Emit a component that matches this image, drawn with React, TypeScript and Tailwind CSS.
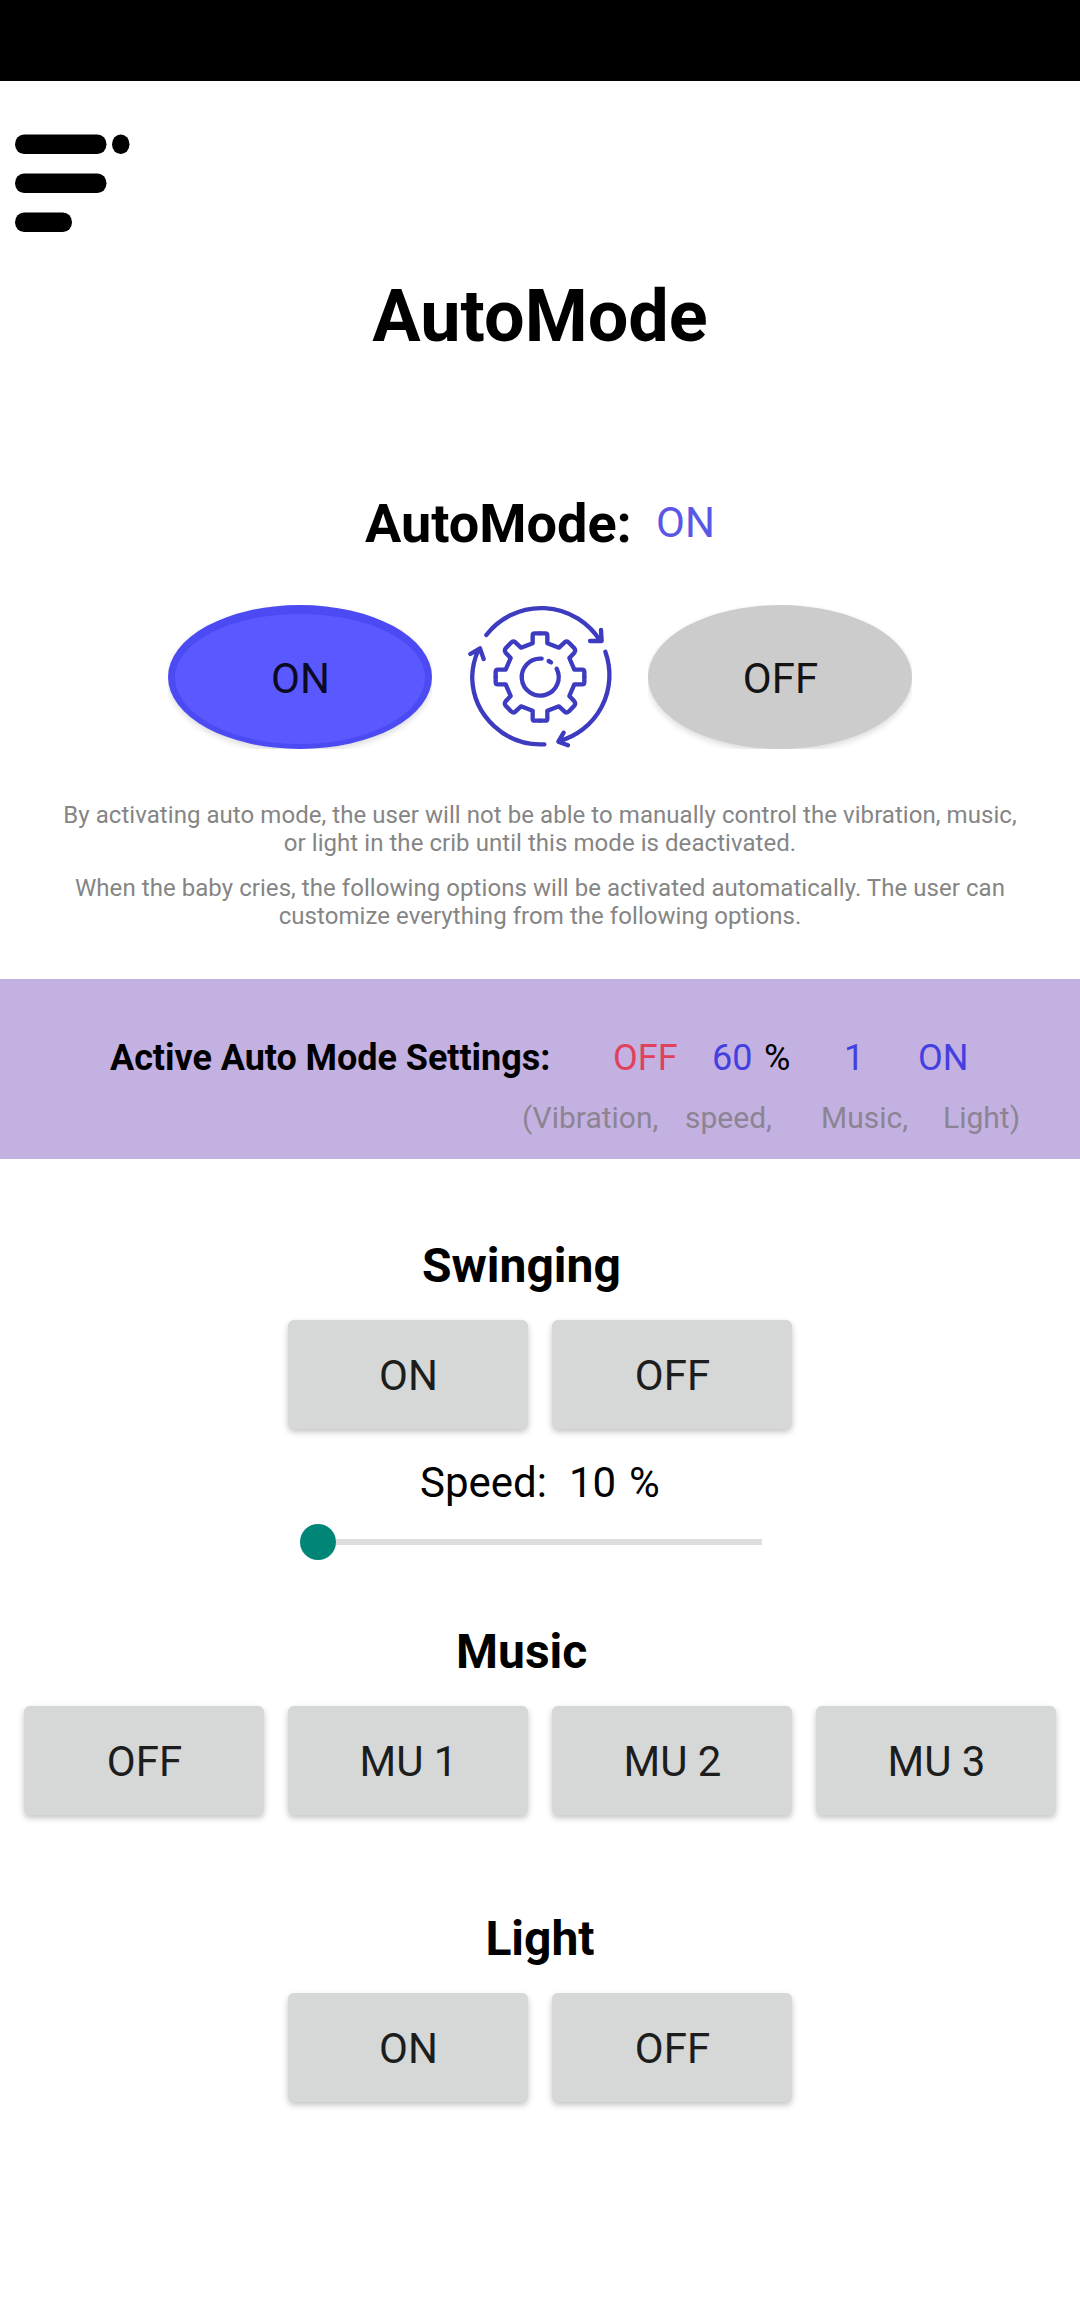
import React from 'react';

const QUADRANT =
  'M0 -131H16Q22 -131 22 -125V-101L57 -88L74 -104Q81 -109 87 -103L103 -86Q108 -79 103 -73L88 -57L103 -22H127Q133 -22 133 -15V0';

function MenuIcon() {
  return (
    <svg className="h-[98px] w-[115px]" viewBox="0 0 115 98" fill="#000">
      <rect x="0" y="0.5" width="91.5" height="19.5" rx="9" ry="9.7" />
      <rect x="97" y="0.5" width="17.5" height="19.5" rx="8.7" ry="9.7" />
      <rect x="0" y="39.5" width="91.5" height="19.5" rx="9" ry="9.7" />
      <rect x="0" y="78.5" width="57" height="19.5" rx="9" ry="9.7" />
    </svg>
  );
}

function AutoGearIcon() {
  return (
    <svg
      className="h-36 w-36"
      viewBox="54 45 432 432"
      fill="none"
      stroke="#3d3bbf"
      strokeWidth="13"
      strokeLinecap="round"
      strokeLinejoin="round"
      overflow="visible"
    >
      <path d="M109 135A208 208 0 0 1 450 152M453 120L455 153L420 153" />
      <path d="M466 185A206 206 0 0 1 326 454M341 428L325 455L354 466" />
      <path d="M283 463A206 206 0 0 1 66.500 262A206 206 0 0 1 86 178M61 192L90 175L101 207" />
      <g transform="translate(270 261)">
        <path d={QUADRANT} />
        <path d={QUADRANT} transform="scale(-1 1)" />
        <path d={QUADRANT} transform="scale(1 -1)" />
        <path d={QUADRANT} transform="scale(-1 -1)" />
        <path d="M5 -55A55.5 55.5 0 1 0 50 -25" />
        <path d="M26 -48L33 -44" />
      </g>
    </svg>
  );
}

function GreyButton({ label }: { label: string }) {
  return (
    <button className="h-[109px] w-60 rounded-md bg-[#d6d7d7] pl-px pt-[3px] text-[42px] leading-[50px] text-[#1c1d1d] shadow-[0_3px_6px_rgba(0,0,0,0.24)]">
      {label}
    </button>
  );
}

function ButtonRow({ labels }: { labels: string[] }) {
  return (
    <div className="flex h-[110px] justify-center gap-6">
      {labels.map((label) => (
        <GreyButton key={label} label={label} />
      ))}
    </div>
  );
}

export default function App() {
  return (
    <div className="flex h-[2312px] w-[1080px] flex-col overflow-hidden bg-white font-['Roboto',sans-serif] text-black">
      <div className="h-[81px] shrink-0 bg-black" />

      <header className="flex h-[194px] shrink-0 items-start pl-[15px] pt-[53px]">
        <MenuIcon />
      </header>
      <h1 className="text-center text-[72px] font-bold leading-[84px]">AutoMode</h1>

      <div className="mt-[133px] flex h-16 items-start pl-[365px]">
        <h2 className="w-[291px] text-[54px] font-bold leading-[64px]">AutoMode:</h2>
        <span className="mt-[6px] text-[42px] leading-[50px] text-[#5a57e6]">ON</span>
      </div>

      <div className="mt-[49px] flex h-36 justify-center gap-9">
        <div className="h-36 w-[264px] overflow-hidden">
          <button className="h-36 w-[264px] rounded-[50%] border-x-[7px] border-b-[5px] border-t-[9px] border-[#4c4af2] bg-[#5a59ff] pl-px text-[42px] leading-[50px] text-[#0a0a25] shadow-[0_3px_6px_rgba(0,0,0,0.14)]">
            ON
          </button>
        </div>
        <AutoGearIcon />
        <div className="h-36 w-[264px] overflow-hidden">
          <button className="h-36 w-[264px] rounded-[50%] bg-[#cccccc] pl-px pt-[3px] text-[42px] leading-[50px] text-[#141414] shadow-[0_3px_6px_rgba(0,0,0,0.14)]">
            OFF
          </button>
        </div>
      </div>

      <div className="mt-[52px] flex flex-col gap-[17px] text-center text-2xl leading-7 tracking-[0.055px] text-[#858585]">
        <p>
          By activating auto mode, the user will not be able to manually control the vibration, music,
          <br />
          or light in the crib until this mode is deactivated.
        </p>
        <p>
          When the baby cries, the following options will be activated automatically. The user can
          <br />
          customize everything from the following options.
        </p>
      </div>

      <section className="mt-[49px] h-[180px] shrink-0 bg-[#c3b1e1] pt-[58px]">
        <div className="flex pl-[110px] text-4xl leading-[42px] text-[#443fe0]">
          <span className="w-[503px] font-bold tracking-[-0.05px] text-black">Active Auto Mode Settings:</span>
          <span className="w-[99px] text-[#e0415c]">OFF</span>
          <span className="w-[52px]">60</span>
          <span className="w-[80px] text-black">%</span>
          <span className="w-[74px]">1</span>
          <span>ON</span>
        </div>
        <div className="mt-[21px] flex pl-[522px] text-3xl leading-9 text-[#8c8492]">
          <span className="w-[163px]">(Vibration,</span>
          <span className="w-[136px]">speed,</span>
          <span className="w-[122px]">Music,</span>
          <span>Light)</span>
        </div>
      </section>

      <section className="mt-[79px]">
        <h3 className="mb-[26px] pl-[422px] text-5xl font-bold leading-[56px]">Swinging</h3>
        <ButtonRow labels={['ON', 'OFF']} />
        <div className="mt-7 flex pl-[420px] text-[42px] leading-[50px]">
          <span className="w-[149px]">Speed:</span>
          <span className="w-[60px]">10</span>
          <span>%</span>
        </div>
        <div className="ml-[300px] mt-4 flex h-9 w-[462px] items-center">
          <div className="size-9 rounded-full bg-[#008577]" />
          <div className="h-1.5 flex-1 bg-[#dedede]" />
        </div>
      </section>

      <section className="mt-16">
        <h3 className="mb-[26px] pl-[456px] text-5xl font-bold leading-[56px]">Music</h3>
        <ButtonRow labels={['OFF', 'MU 1', 'MU 2', 'MU 3']} />
      </section>

      <section className="mt-[95px]">
        <h3 className="mb-[26px] text-center text-5xl font-bold leading-[56px]">Light</h3>
        <ButtonRow labels={['ON', 'OFF']} />
      </section>
    </div>
  );
}
